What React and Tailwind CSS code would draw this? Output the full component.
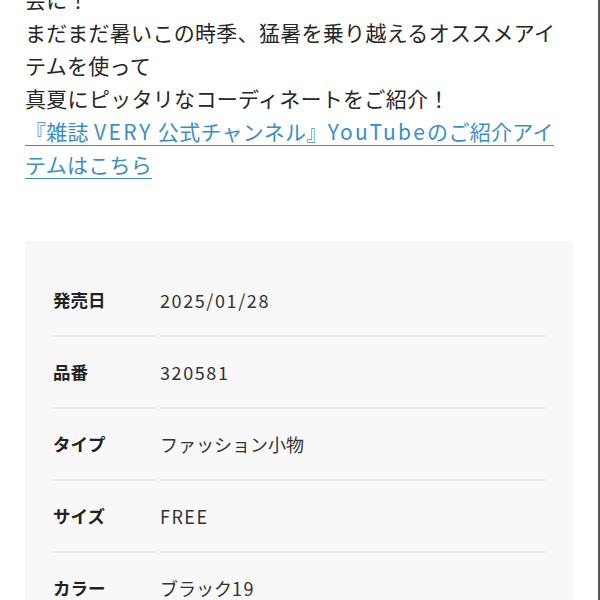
const FONT = "font-['Noto_Sans_CJK_JP','Noto_Sans',sans-serif]";

const SPECS = [
  { label: "発売日", value: <span className="tracking-[1.6px]">2025/01/28</span> },
  { label: "品番", value: <span className="tracking-[1.6px]">320581</span> },
  { label: "タイプ", value: "ファッション小物" },
  { label: "サイズ", value: <span className="tracking-[1.5px]">FREE</span> },
  {
    label: "カラー",
    value: (
      <>
        ブラック<span className="tracking-[1.5px]">19</span>
      </>
    ),
  },
];

export default function App() {
  return (
    <div className={`${FONT} h-[600px] w-[600px] overflow-hidden bg-white border-r-2 border-[#555]`}>
      {/* Description text */}
      <div className="-mt-[17px] pl-[25px] text-[21px] leading-[33px] tracking-[0.3px] text-[#262626] whitespace-nowrap">
        <p>会に！</p>
        <p>まだまだ暑いこの時季、猛暑を乗り越えるオススメアイ</p>
        <p>テムを使って</p>
        <p>真夏にピッタリなコーディネートをご紹介！</p>
        <p>
          <a href="#" className="text-[#3b8fc4] underline underline-offset-[5px] decoration-1">
            『雑誌 <span className="tracking-[2.5px]">VERY</span> 公式チャンネル』
            <span className="tracking-[2.2px]">YouTube</span>のご紹介アイ
          </a>
        </p>
        <p>
          <a href="#" className="text-[#3b8fc4] underline underline-offset-[5px] decoration-1">
            テムはこちら
          </a>
        </p>
      </div>

      {/* Spec table */}
      <div className="ml-[25px] mt-[60px] w-[548px] bg-[#f8f8f8] px-[28px] pt-[24px] pb-[20px]">
        {SPECS.map((row) => (
          <div key={row.label} className="grid grid-cols-[103px_1fr] gap-x-[4px]">
            <div className="flex h-[72px] items-center border-b-2 border-[#ebebeb] text-[17.5px] font-bold text-[#222]">
              {row.label}
            </div>
            <div className="flex h-[72px] items-center border-b-2 border-[#ebebeb] text-[18px] text-[#333]">
              <span>{row.value}</span>
            </div>
          </div>
        ))}
      </div>
    </div>
  );
}
